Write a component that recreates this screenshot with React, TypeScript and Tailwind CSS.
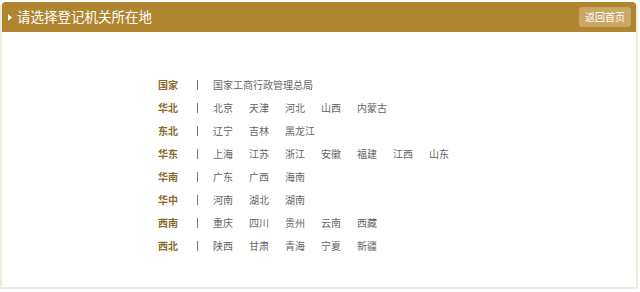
const regions: { name: string; items: string[] }[] = [
  { name: "国家", items: ["国家工商行政管理总局"] },
  { name: "华北", items: ["北京", "天津", "河北", "山西", "内蒙古"] },
  { name: "东北", items: ["辽宁", "吉林", "黑龙江"] },
  { name: "华东", items: ["上海", "江苏", "浙江", "安徽", "福建", "江西", "山东"] },
  { name: "华南", items: ["广东", "广西", "海南"] },
  { name: "华中", items: ["河南", "湖北", "湖南"] },
  { name: "西南", items: ["重庆", "四川", "贵州", "云南", "西藏"] },
  { name: "西北", items: ["陕西", "甘肃", "青海", "宁夏", "新疆"] },
];

export default function App() {
  return (
    <div
      className="w-[640px] h-[292px] bg-white pt-[2px]"
      style={{ fontFamily: '"Microsoft YaHei", "Noto Sans CJK SC", sans-serif' }}
    >
      <div className="w-[638px] rounded-t-[4px] border-x-2 border-b-2 border-[#efebdc] bg-white">
        <div className="flex h-[30px] items-center justify-between rounded-t-[4px] bg-[#b0852f] pl-[6px] pr-[5px]">
          <div className="flex items-center gap-[5px] text-white">
            <svg width="4" height="7" viewBox="0 0 4 7" className="mt-[1px]">
              <path d="M0 0 L4 3.5 L0 7 Z" fill="#ffffff" />
            </svg>
            <span className="text-[13.5px] leading-none">请选择登记机关所在地</span>
          </div>
          <button className="h-[20px] rounded-[3px] bg-[#c9a764] px-[6px] text-[10px] leading-none text-white">
            返回首页
          </button>
        </div>
        <div className="pl-[156px] pt-[41px] pb-[30px]">
          {regions.map((r) => (
            <div key={r.name} className="flex h-[23px] items-center text-[10px]">
              <span className="w-[39px] font-bold text-[#8b6a2a]">{r.name}</span>
              <div className="mr-[15px] h-[10px] w-[1px] bg-[#777]" />
              <div className="flex gap-[16px] text-[#666]">
                {r.items.map((it) => (
                  <span key={it}>{it}</span>
                ))}
              </div>
            </div>
          ))}
        </div>
      </div>
    </div>
  );
}
